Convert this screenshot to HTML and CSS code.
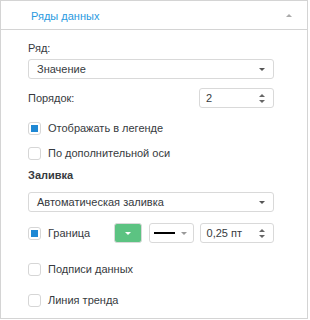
FILE: index.html
```html
<!DOCTYPE html>
<html lang="ru">
<head>
<meta charset="utf-8">
<link rel="stylesheet" href="styles.css">
</head>
<body>
<div class="panel">
  <div class="panel-head">
    <span class="panel-title">Ряды данных</span>
    <span class="collapse"></span>
  </div>
  <div class="panel-body">
    <div class="row label-row">Ряд:</div>
    <div class="select sel-series"><span>Значение</span><i class="arrow"></i></div>
    <div class="row order-row">
      <span>Порядок:</span>
      <div class="spin"><span>2</span><i class="spin-arrows"><b class="up"></b><b class="down"></b></i></div>
    </div>
    <label class="row check-row cb-legend"><span class="cb checked"></span>Отображать в легенде</label>
    <label class="row check-row cb-axis"><span class="cb"></span>По дополнительной оси</label>
    <div class="row section">Заливка</div>
    <div class="select sel-fill"><span>Автоматическая заливка</span><i class="arrow"></i></div>
    <div class="row border-row">
      <label class="check-row border-check"><span class="cb checked"></span>Граница</label>
      <div class="color-btn"><i class="arrow white"></i></div>
      <div class="line-btn"><span class="line"></span><i class="arrow light"></i></div>
      <div class="spin spin-width"><span>0,25 пт</span><i class="spin-arrows"><b class="up"></b><b class="down"></b></i></div>
    </div>
    <label class="row check-row cb-labels"><span class="cb"></span>Подписи данных</label>
    <label class="row check-row cb-trend"><span class="cb"></span>Линия тренда</label>
  </div>
</div>
</body>
</html>
```
FILE: styles.css
```css
* { box-sizing: border-box; }
html, body { margin: 0; padding: 0; background: #fff; }
body {
  font-family: "Liberation Sans", Arial, sans-serif;
  font-size: 11px;
  color: #363a40;
}
.panel {
  width: 308px;
  height: 319px;
  border: 1px solid #d4d4d4;
  background: #fff;
}
.panel-head {
  height: 29px;
  border-bottom: 1px solid #d4d4d4;
  display: flex;
  align-items: center;
  padding: 1px 15px 0 30px;
  justify-content: space-between;
}
.panel-title { color: #2a9ae0; font-size: 11px; }
.collapse {
  width: 0; height: 0;
  border-left: 3px solid transparent;
  border-right: 3px solid transparent;
  border-bottom: 3px solid #aaa;
}
.panel-body {
  padding: 8px 33px 0 27px;
  display: flex;
  flex-direction: column;
}
.row {
  height: 20px;
  display: flex;
  align-items: center;
}
.select {
  height: 20px;
  margin-top: 1px;
  border: 1px solid #d9d9d9;
  border-radius: 3px;
  display: flex;
  align-items: center;
  justify-content: space-between;
  padding: 0 8px 0 8px;
}
.arrow {
  width: 0; height: 0;
  border-left: 3px solid transparent;
  border-right: 3px solid transparent;
  border-top: 3px solid #555;
}
.arrow.white { border-top-color: #fff; }
.arrow.light { border-top-color: #999; }
.order-row { margin-top: 9px; justify-content: space-between; }
.spin {
  width: 75px;
  height: 20px;
  border: 1px solid #d9d9d9;
  border-radius: 3px;
  display: flex;
  align-items: center;
  justify-content: space-between;
  padding: 0 8px 0 6px;
}
.spin-arrows { display: flex; flex-direction: column; gap: 3px; }
.spin-arrows b { width: 0; height: 0; border-left: 3px solid transparent; border-right: 3px solid transparent; }
.spin-arrows .up { border-bottom: 3px solid #666; }
.spin-arrows .down { border-top: 3px solid #666; }
.check-row { display: flex; align-items: center; gap: 7px; }
.cb {
  width: 13px; height: 13px;
  border: 1px solid #d6d6d6;
  border-radius: 3px;
  display: flex; align-items: center; justify-content: center;
  flex: none;
}
.cb.checked::after {
  content: "";
  width: 7px; height: 7px;
  background: #1e88d4;
}
.cb-legend { margin-top: 10px; }
.cb-axis { margin-top: 5px; }
.section { margin-top: 2px; font-weight: bold; }
.sel-fill { margin-top: 7px; }
.border-row { margin-top: 11px; }
.border-check { width: 87px; }
.color-btn {
  width: 28px; height: 20px;
  background: #5cc382;
  border: 1px solid #d9d9d9;
  border-radius: 3px;
  display: flex; align-items: center; justify-content: center;
}
.line-btn {
  margin-left: 7px;
  width: 45px; height: 20px;
  border: 1px solid #d9d9d9;
  border-radius: 3px;
  display: flex; align-items: center; justify-content: space-between;
  padding: 0 6px 0 4px;
}
.line { width: 21px; height: 2px; background: #000; }
.spin-width { margin-left: 6px; }
.cb-labels { margin-top: 16px; }
.cb-trend { margin-top: 11px; }
```
